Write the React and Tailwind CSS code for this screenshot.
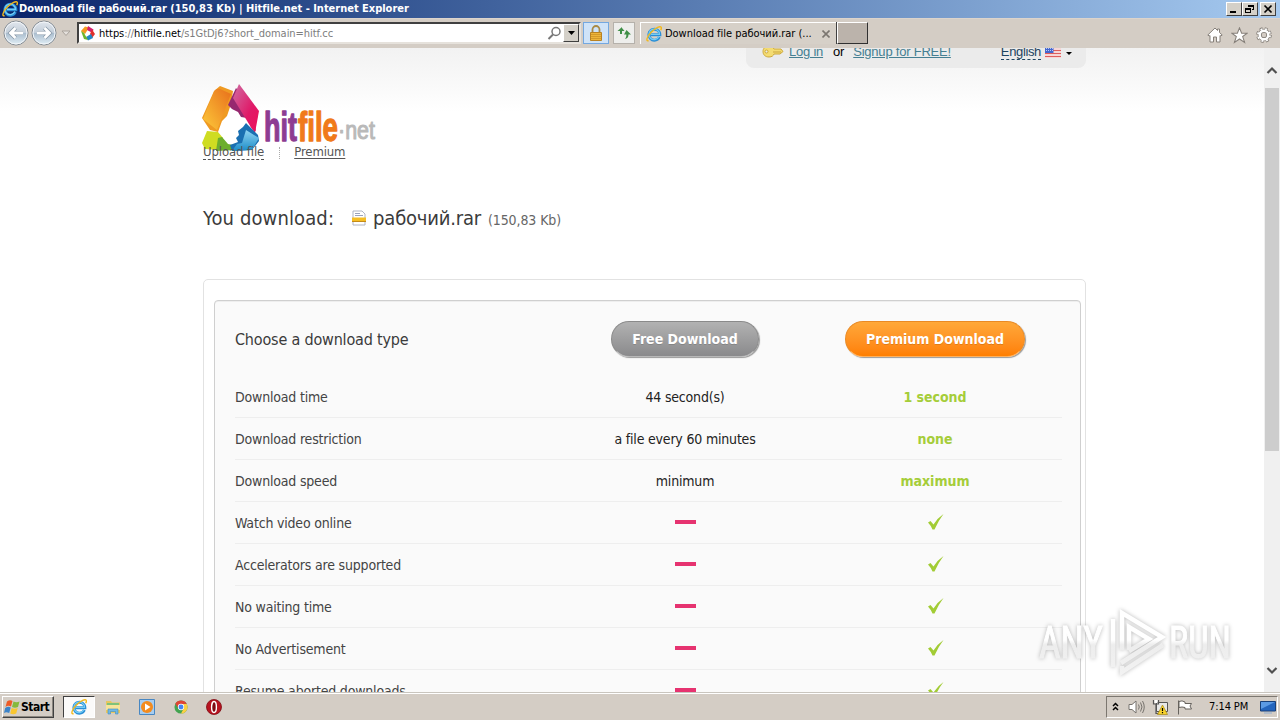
import { useId } from "react";

const rows = [
    { label: "Download time", free: "44 second(s)", premium: "1 second" },
    { label: "Download restriction", free: "a file every 60 minutes", premium: "none" },
    { label: "Download speed", free: "minimum", premium: "maximum" },
    { label: "Watch video online" },
    { label: "Accelerators are supported" },
    { label: "No waiting time" },
    { label: "No Advertisement" },
    { label: "Resume aborted downloads" },
];

function IeIcon({ className }) {
    return (
        <svg className={className} viewBox="0 0 16 16" fill="none">
            <path d="M13.4 11A5.500 5.500 0 1 1 13.900 8.700H4.600" stroke="#2a8ed6" strokeWidth="2.900" />
            <path d="M13 10.600A5.300 5.300 0 1 1 13.500 8.400H5" stroke="#74cdf5" strokeWidth="1.200" />
            <path
                d="M2.600 14.600C-.6 15.800 1 10.300 5.400 6 9.800 1.700 14.400-.4 15.200 1.300c.4.900 0 2-.5 3"
                stroke="#f3b91d"
                strokeWidth="1.400"
            />
        </svg>
    );
}

function HitfileMark({ className }) {
    return (
        <svg className={className} viewBox="0 0 16 16">
            <path d="M1 6 5 1.500l4 1L5 9z" fill="#f39a1f" />
            <path d="m8 1 5.500 3.500L12.500 8 7 5z" fill="#d5206c" />
            <path d="m12 4.500 3 4.500-3 4-2-4z" fill="#e0312d" />
            <path d="m11 9 2 4-5 2.500-2-3.500z" fill="#2187c5" />
            <path d="m1 6 3 2 4 7-4-1z" fill="#6db52d" />
        </svg>
    );
}

function RoundArrow({ flip }) {
    const id = useId();
    return (
        <svg className={flip ? "w-[26px] h-[26px] -scale-x-100" : "w-[26px] h-[26px]"} viewBox="0 0 26 26">
            <defs>
                <linearGradient id={id} x1="0" y1="0" x2="0" y2="1">
                    <stop offset="0" stopColor="#e2e7ee" />
                    <stop offset=".48" stopColor="#c3ced9" />
                    <stop offset=".5" stopColor="#a9bccd" />
                    <stop offset="1" stopColor="#e3f0f7" />
                </linearGradient>
            </defs>
            <circle cx="13" cy="13" r="12" fill={`url(#${id})`} stroke="#838b93" />
            <circle cx="13" cy="13" r="11" fill="none" stroke="#f3f6f9" />
            <path d="M12.500 8 7.500 13l5 5M8 13h12" fill="none" stroke="#8495a5" strokeWidth="4.200" />
            <path d="M12.500 8 7.500 13l5 5M8 13h12" fill="none" stroke="#fff" strokeWidth="2.800" />
        </svg>
    );
}

function TitleBar() {
    return (
        <div className="flex h-[18px] shrink-0 items-center bg-linear-to-r from-[#0a246a] to-[#a6caf0] pl-[2px] pr-[4px]">
            <IeIcon className="h-4 w-4" />
            <span className="ml-px flex-1 whitespace-nowrap text-[11px] font-bold leading-4 tracking-[-0.015px] text-white">
                Download file рабочий.rar (150,83 Kb) | Hitfile.net - Internet Explorer
            </span>
            <div className="flex">
                {["min", "restore", "close"].map((kind) => (
                    <div
                        key={kind}
                        className={
                            "flex h-[14px] w-4 items-center justify-center border border-t-white border-l-white border-r-[#404040] border-b-[#404040] bg-[#d4d0c8]" +
                            (kind === "close" ? " ml-[2px]" : "")
                        }
                    >
                        <svg className="h-[10px] w-3" viewBox="0 0 12 10" fill="none" stroke="#000" shapeRendering="crispEdges">
                            {kind === "min" && <path d="M2 8h6" strokeWidth="2" />}
                            {kind === "restore" && (
                                <>
                                    <path d="M4.500 3V1.500h5v4H8M1.500 4.500h5v4h-5z" />
                                    <path d="M4 1.500h6M1 4.500h6" strokeWidth="2" />
                                </>
                            )}
                            {kind === "close" && (
                                <path d="m2.500 1.500 7 7m0-7-7 7" strokeWidth="1.700" shapeRendering="auto" />
                            )}
                        </svg>
                    </div>
                ))}
            </div>
        </div>
    );
}

function NavBar() {
    return (
        <div className="flex h-[30px] shrink-0 items-start bg-[#d4cdc5] border-t border-[#dcd4cc] text-[11px]">
            <div className="flex pl-[3px] pt-px">
                <RoundArrow />
                <div className="ml-[2px]">
                    <RoundArrow flip />
                </div>
            </div>
            <svg className="ml-1 mt-[11px] h-[7px] w-[10px]" viewBox="0 0 10 7">
                <path d="M1 1h8L5 5.500z" fill="#e4e0dc" stroke="#aaa39c" />
            </svg>
            <div className="ml-[6px] mt-[3px] flex h-[22px] w-[504px] items-center border-2 border-t-[#404040] border-l-[#404040] border-r-[#e6e2dc] border-b-[#e6e2dc] bg-white pl-px">
                <HitfileMark className="h-4 w-4" />
                <span className="ml-[3px] mt-[2px] flex-1 whitespace-nowrap tracking-[-0.05px] text-[#7d7d7d]">
                    <span className="text-black">https</span>://<span className="text-black">hitfile.net</span>
                    /s1GtDj6?short_domain=hitf.cc
                </span>
                <svg className="h-[15px] w-[15px]" viewBox="0 0 15 15" fill="none" stroke="#777">
                    <circle cx="9" cy="5.500" r="4" strokeWidth="1.500" />
                    <path d="m6 8.500-4.500 4.500" strokeWidth="2" />
                </svg>
                <div className="ml-px flex h-[18px] w-4 items-center justify-center border border-t-white border-l-white border-r-[#404040] border-b-[#404040] bg-[#d4d0c8]">
                    <svg className="h-1 w-[7px]" viewBox="0 0 7 4">
                        <path d="M0 0h7L3.500 4z" />
                    </svg>
                </div>
            </div>
            <div className="ml-[2px] mt-[3px] flex h-[22px] w-[26px] items-center justify-center border border-[#74a8e0] bg-[#cfe3f8]">
                <svg className="h-4 w-4" viewBox="0 0 16 16">
                    <path d="M4.500 8V4.500a3.500 3.500 0 0 1 7 0V8" fill="none" stroke="#a98a45" strokeWidth="1.800" />
                    <path d="M2.500 7.500h11v8h-11z" fill="#eeb53a" stroke="#b98222" />
                    <path d="M3 9.500h10M3 11.500h10M3 13.500h10" stroke="#d39a2a" />
                </svg>
            </div>
            <div className="ml-1 mt-[3px] flex h-[22px] w-[22px] items-center justify-center border border-[#b5b1ab] bg-[#eeeeec]">
                <svg className="h-[14px] w-[14px]" viewBox="0 0 14 14">
                    <path d="M5 1 .5 5H3v3h2V5h2.500L5 2zM9.500 4 14 8.500h-2.500c0 3-1.500 4-3.500 4.500 1-1.500 1.500-2.500 1.300-4.500H7z" fill="#3f8f47" />
                </svg>
            </div>
            <div className="ml-[5px] mt-[3px] flex h-[22px] w-[197px] items-center border-t border-l border-white bg-[#d6d0c8] pl-[5px]">
                <IeIcon className="h-4 w-4" />
                <span className="ml-[3px] mt-[2px] flex-1 whitespace-nowrap tracking-[-0.03px]">Download file рабочий.rar (...</span>
                <svg className="mr-[7px] h-2 w-2" viewBox="0 0 8 8">
                    <path d="m.5.5 7 7m0-7-7 7" stroke="#7b7670" strokeWidth="1.600" />
                </svg>
            </div>
            <div className="mt-[3px] h-[22px] w-[31px] border border-t-white border-l-white border-r-[#303030] border-b-[#303030] bg-[#bbb3ab] shadow-[-1px_0_#404040]" />
            <div className="ml-auto mr-[8px] mt-[8px] flex gap-[8px]">
                <svg className="h-4 w-4" viewBox="0 0 16 16">
                    <path d="M8 1 .8 8l1.400 1 .8-.5V15h3.500v-5h3v5H13V8.500l.8.500 1.400-1L12.500 5.500V2h-2v1.500z" fill="#fff" stroke="#86807a" />
                </svg>
                <svg className="h-[17px] w-[17px]" viewBox="0 0 16 16">
                    <path d="m8 .8 2 5h5.300L11 9l1.800 5.600L8 11.300l-4.800 3.300L5 9 .7 5.800H6z" fill="#fff" stroke="#86807a" />
                </svg>
                <svg className="h-4 w-4" viewBox="0 0 16 16" fill="none">
                    <circle cx="8" cy="8" r="6.300" stroke="#86807a" strokeWidth="3" strokeDasharray="2.800 2.150" />
                    <circle cx="8" cy="8" r="4.300" stroke="#86807a" strokeWidth="4" />
                    <circle cx="8" cy="8" r="6" stroke="#fff" strokeWidth="2" strokeDasharray="1.800 2.912" strokeDashoffset="-.5" />
                    <circle cx="8" cy="8" r="4.300" stroke="#fff" strokeWidth="2.400" />
                </svg>
            </div>
        </div>
    );
}

function Logo() {
    return (
        <svg className="block h-[70px] w-[176px]" viewBox="202 83 176 70">
            <defs>
                <linearGradient id="orange" x1="1" y1="0" x2="0" y2="1">
                    <stop offset="0" stopColor="#e86f1b" />
                    <stop offset="1" stopColor="#fdca3a" />
                </linearGradient>
                <linearGradient id="pink" x1="0" y1="0" x2="1" y2="1">
                    <stop offset="0" stopColor="#cf6da3" />
                    <stop offset=".6" stopColor="#e01a68" />
                    <stop offset="1" stopColor="#ee1058" />
                </linearGradient>
                <linearGradient id="blue" x1="0" y1="0" x2="0" y2="1">
                    <stop offset="0" stopColor="#8fd4f2" />
                    <stop offset="1" stopColor="#1c8cc8" />
                </linearGradient>
            </defs>
            <path d="m214 91 6-5 13 5-2 13-4 12-5 5-4 11-8-2-8-12z" fill="#ef9a22" />
            <path d="m203 119 11-27q2-4 6-3l11 5-14 36z" fill="url(#orange)" />
            <path d="m228 105 8-17 13 15 7 28-5-4-4-9-6-1-3-5-6-3z" fill="#96286f" />
            <path d="m239 84 20 27-4 22-3-4-19-31z" fill="url(#pink)" />
            <path d="m207 131 11 1 5 6-4 12-14-1-3-6z" fill="#cfdc22" />
            <path d="m218 138 4-1 6 7 5 1 3 5-20 1z" fill="#6dae2d" />
            <path d="m243 127 3-4 12 12 1 6-7 9-20 1-2-6 8-3-2-4 3-3-1-4z" fill="#1a6fb1" />
            <path d="m246 130 13 8-7 12-20 1 5-7 5-1z" fill="url(#blue)" />
            <g fontFamily="Liberation Sans, sans-serif" strokeLinejoin="round">
                <text x="264" y="140.500" fontSize="40" fontWeight="bold" fill="#8d3c92" stroke="#8d3c92" strokeWidth="1.300" textLength="33" lengthAdjust="spacingAndGlyphs">hit</text>
                <text x="298" y="140.500" fontSize="40" fontWeight="bold" fill="#f07a1b" stroke="#f07a1b" strokeWidth="1.300" textLength="40" lengthAdjust="spacingAndGlyphs">file</text>
                <text x="338" y="138.500" fontSize="26" fill="#b9b9b9" stroke="#b9b9b9" strokeWidth="1.100" textLength="37" lengthAdjust="spacingAndGlyphs">·net</text>
            </g>
        </svg>
    );
}

function AccountBar() {
    return (
        <div className="ml-auto flex h-5 w-[340px] items-start rounded-b-lg bg-[#ebebeb] pl-4 pr-[14px] font-['Liberation_Sans',sans-serif] text-[13px] leading-[15px] tracking-[-0.22px] text-black">
            <svg className="mt-[-3px] h-[13px] w-[22px]" viewBox="0 0 22 13">
                <path d="M7 1C3 1 1 3.500 1 6.500S3 12 7 12c3 0 4.500-1.500 5-3h6l3-2.500L19 4h-7C11 2 9.500 1 7 1z" fill="#f4dc72" stroke="#cda83a" />
                <circle cx="4.500" cy="6.500" r="1.500" fill="#ebebeb" stroke="#cda83a" />
                <path d="M11 7h8" stroke="#c9a53c" />
            </svg>
            <a className="ml-[5px] mt-[-4px] whitespace-nowrap text-[#457f92] underline">Log in</a>
            <span className="ml-[10px] mt-[-4px]">or</span>
            <a className="ml-[9px] mt-[-4px] whitespace-nowrap text-[#457f92] underline">Signup for FREE!</a>
            <a className="ml-auto mt-[-4px] border-b border-dashed border-[#1d4461] tracking-[-0.35px] text-[#1d4461]">English</a>
            <svg className="ml-1 mt-[-1px] h-[11px] w-4" viewBox="0 0 16 11">
                <path fill="#fff" d="M0 0h16v11H0z" />
                <path d="M0 .5h16M0 3.500h16M0 6.500h16M0 9.500h16" stroke="#df5d5d" strokeWidth="1.600" />
                <path fill="#4467cf" d="M0 0h8.500v6H0z" />
                <path d="M1 1.500h7M1 3.500h7" stroke="#b9c8f5" strokeDasharray="1 1" />
            </svg>
            <svg className="ml-[5px] mt-[4px] h-[3px] w-[6px]" viewBox="0 0 6 3">
                <path d="M0 0h6L3 3z" />
            </svg>
        </div>
    );
}

function DownloadTable() {
    return (
        <div className="mt-[48px] rounded-[5px] border border-[#e2e2e2] bg-white px-[10px] pt-5 pr-[4px]">
            <div className="rounded-[4px] border border-[#cfcfcf] bg-[#fafafa] px-5 pr-[18px] shadow-[inset_0_1px_#eee]">
                <div className="grid h-[75px] grid-cols-[325px_250px_250px] pt-5 text-[#3b3b3b]">
                    <span className="h-9 text-[16px] leading-[38px] tracking-[-0.18px]">Choose a download type</span>
                    <div className="flex justify-center">
                        <button className="h-9 w-[148px] rounded-full border border-[#8a8a8a] border-b-[#b8b8b8] bg-linear-to-b from-[#b2b2b2] to-[#8a8a8c] text-sm font-bold leading-[34px] text-white shadow-[1px_1px_1px_#999] text-shadow-2xs">
                            Free Download
                        </button>
                    </div>
                    <div className="flex justify-center">
                        <button className="h-9 w-[180px] rounded-full border border-[#e98a24] border-b-[#ffb05c] bg-linear-to-b from-[#ffa838] to-[#ff7f00] text-sm font-bold leading-[34px] text-white shadow-[1px_1px_1px_#999] text-shadow-2xs">
                            Premium Download
                        </button>
                    </div>
                </div>
                {rows.map((row) => (
                    <div
                        key={row.label}
                        className="grid h-[42px] grid-cols-[325px_250px_250px] items-center border-b border-[#eeeeee] text-sm tracking-[-0.19px] text-[#444]"
                    >
                        <span>{row.label}</span>
                        <div className="flex justify-center text-[#222]">
                            {row.free || <div className="mb-[1px] h-1 w-[21px] bg-[#e63370]" />}
                        </div>
                        <div className="flex justify-center font-bold tracking-[-0.05px] text-[#a5cd39]">
                            {row.premium || (
                                <svg className="mb-[2px] ml-px h-4 w-4" viewBox="0 0 16 16">
                                    <path d="M0 8.500 2.500 7l3 3.500Q9.500 4 15.500 0 10.500 6.500 6.500 15.500h-2Q2.500 11 0 8.500z" fill="#a2cc35" />
                                </svg>
                            )}
                        </div>
                    </div>
                ))}
            </div>
        </div>
    );
}

function Watermark() {
    return (
        <svg className="absolute left-[1030px] top-[600px] h-[80px] w-[210px] drop-shadow-[0_0_2px_rgba(0,0,0,0.28)]" viewBox="0 0 210 80">
            <defs>
                <linearGradient id="fade" gradientUnits="userSpaceOnUse" x1="0" y1="0" x2="0" y2="80">
                    <stop offset=".5" stopColor="#fff" />
                    <stop offset=".56" stopColor="#ededed" />
                    <stop offset="1" stopColor="#f3f3f3" />
                </linearGradient>
            </defs>
            <g fill="url(#fade)" stroke="url(#fade)" strokeWidth="1" fontFamily="Roboto, sans-serif" fontSize="45">
                <text x="9" y="58" textLength="64" lengthAdjust="spacingAndGlyphs">ANY</text>
                <text x="139" y="58" textLength="62" lengthAdjust="spacingAndGlyphs">RUN</text>
            </g>
            <g fill="none" stroke="url(#fade)" strokeWidth="4.500">
                <path d="M92 50V13l40 24-41 26" />
                <path d="M99 50V27l20 12-20 12" />
                <path d="M83 19v48M92 66v6l41-27" />
            </g>
        </svg>
    );
}

function ScrollBar() {
    return (
        <div className="flex w-4 flex-col items-center bg-[#f0f0f0]">
            <svg className="mt-[18px] h-[9px] w-3" viewBox="0 0 12 9">
                <path d="m1.500 7 4.500-4.500L10.500 7" fill="none" stroke="#505050" strokeWidth="2.200" />
            </svg>
            <div className="mt-[13px] h-[363px] w-[14px] bg-[#cdcdcd]" />
            <svg className="mb-[17px] mt-auto h-[9px] w-3" viewBox="0 0 12 9">
                <path d="M1.500 2 6 6.500 10.500 2" fill="none" stroke="#505050" strokeWidth="2.200" />
            </svg>
        </div>
    );
}

function TaskBar() {
    return (
        <div className="flex h-7 shrink-0 items-center border-t border-[#c9c5be] bg-[#d4cdc5] pl-[2px] pr-[2px] text-[11px] shadow-[inset_0_1px_#fff]">
            <div className="mt-px flex h-[22px] w-[52px] items-center border border-t-white border-l-white border-r-[#404040] border-b-[#404040] pl-px shadow-[inset_-1px_-1px_#8c8780]">
                <svg className="h-4 w-4" viewBox="0 0 16 16">
                    <path d="M3 2.500q3-2 5.500-.5L7 7.500q-3-1.500-5.500.5z" fill="#ed5b27" />
                    <path d="M9.500 2.500q3 1.500 6 0L14 8q-3 1.500-6 0z" fill="#85b93c" />
                    <path d="M1.200 9q3-2 5.500-.5L5.200 14q-3-1.500-5.200 0z" fill="#3b83c9" />
                    <path d="M7.700 9q3 1.500 6 0l-1.500 5.500q-3 1.500-6 0z" fill="#f9c62f" />
                </svg>
                <span className="ml-px text-xs font-bold tracking-[-0.5px]">Start</span>
            </div>
            <div className="ml-[9px] flex h-[22px] w-8 items-center justify-center border border-t-[#404040] border-l-[#404040] border-r-white border-b-white bg-[#fbfaf9]">
                <IeIcon className="h-4 w-4" />
            </div>
            <svg className="ml-[10px] h-4 w-4" viewBox="0 0 16 16">
                <path d="M1 2h5l1 1.500h8V14H1z" fill="#e7c75e" />
                <path d="M2 4h12v3H2z" fill="#7fc27a" />
                <path d="M1 6h14v5H1z" fill="#f7e49a" />
                <path d="M3 15V10h10v5h-2.500v-2.500h-5V15z" fill="#6fb8e4" stroke="#3f8fc5" strokeWidth=".6" />
            </svg>
            <svg className="ml-[18px] h-4 w-4" viewBox="0 0 16 16">
                <path d="M.5.5h15v15H.5z" fill="#a7cdf0" stroke="#4887c2" />
                <circle cx="8" cy="8" r="6" fill="#f38b1e" />
                <path d="M6 4.500 11.500 8 6 11.500z" fill="#fff" />
            </svg>
            <svg className="ml-[19px] h-[14px] w-[14px]" viewBox="0 0 16 16">
                <circle cx="8" cy="8" r="7.500" fill="#42a350" />
                <path d="M1.500 4.300A7.500 7.500 0 0 1 14.500 4.300L8 5 5 9.500z" fill="#df4435" />
                <path d="M8 4.500h6.600A7.500 7.500 0 0 1 8 15.500l3.200-6z" fill="#fbd043" />
                <circle cx="8" cy="8" r="3.600" fill="#fff" />
                <circle cx="8" cy="8" r="2.800" fill="#4484f2" />
            </svg>
            <svg className="ml-[18px] h-4 w-4" viewBox="0 0 16 16">
                <circle cx="8" cy="8" r="7.500" fill="#b81320" stroke="#7e0a12" strokeWidth=".8" />
                <ellipse cx="8" cy="8" rx="2.400" ry="5.500" fill="#7e0a12" stroke="#fff" strokeWidth="1.400" />
            </svg>
            <div className="ml-auto mt-px flex h-[22px] w-[172px] items-center border border-t-[#7c7770] border-l-[#7c7770] border-r-white border-b-white">
                <svg className="mb-px ml-[5px] h-[9px] w-[7px]" viewBox="0 0 7 9" fill="none" stroke="#000" strokeWidth="1.500">
                    <path d="m1 4 2.500-2.500L6 4M1 8l2.500-2.500L6 8" />
                </svg>
                <svg className="ml-[9px] h-4 w-[17px]" viewBox="0 0 17 16" fill="none" stroke="#77736e">
                    <path d="M1 5.500h3L8 2v12l-4-3.500H1z" fill="#fff" />
                    <path d="M10.500 5.500q1.500 2.500 0 5M12.500 3.500q3 4.500 0 9M14.500 2q3.500 6 0 12" />
                </svg>
                <svg className="ml-[7px] h-4 w-4" viewBox="0 0 16 16">
                    <path d="M4.500 3.500h11v9h-11z" fill="#e8e8e8" stroke="#555" />
                    <path d="M1.500 1v4h5V1M4 5v9.500h4" fill="none" stroke="#555" strokeWidth="1.200" />
                    <path d="M2.500 1h3v3h-3z" fill="#fff" />
                    <path d="m10.500 6 5 9.500h-10z" fill="#f7d22d" stroke="#a38716" strokeWidth=".7" />
                    <path d="M10.500 9v3m0 1v1.300" stroke="#000" strokeWidth="1.200" />
                </svg>
                <svg className="ml-[9px] h-4 w-4" viewBox="0 0 16 16">
                    <path d="M1.500 1.500v14M2 2.500q3-1.500 6 .5v1.500h6.500L13 7l1.500 3H8V8.500q-3-1-6 0z" fill="#fff" stroke="#66625d" />
                </svg>
                <span className="ml-4 mt-px whitespace-nowrap tracking-[-0.1px]">7:14 PM</span>
                <svg className="ml-auto mr-px h-[14px] w-4" viewBox="0 0 16 14">
                    <path d="M.5 1.500h15v9.500H.5z" fill="#2465bd" stroke="#173f79" />
                    <path d="M1 2h14L1 9z" fill="#5b9ae4" />
                    <path d="M4 13h8" stroke="#8faccf" />
                </svg>
            </div>
        </div>
    );
}

export default function App() {
    return (
        <div className="relative flex h-[720px] w-[1280px] flex-col overflow-hidden bg-white font-['DejaVu_Sans_Condensed','DejaVu_Sans','Noto_Sans',sans-serif] font-stretch-condensed">
            <TitleBar />
            <NavBar />
            <div className="flex min-h-0 flex-1">
                <div className="flex-1 overflow-hidden bg-linear-to-b from-[#f2f2f2] to-white to-[64px] pl-[203px]">
                    <div className="w-[883px]">
                        <AccountBar />
                        <div className="-ml-px mt-[15px] h-[60px]">
                            <Logo />
                        </div>
                        <div className="relative flex h-[18px] items-start text-[13px] leading-[17px] tracking-[-0.12px] text-[#555]">
                            <a className="h-[17px] border-b border-dashed border-[#555]">Upload file</a>
                            <span className="ml-[15px] mt-1 h-3 border-l border-dotted border-[#aaa]" />
                            <a className="ml-[14px] underline underline-offset-2">Premium</a>
                        </div>
                        <div className="mt-[44px] flex h-[26px] items-center whitespace-nowrap text-[#3b3b3b]">
                            <span className="text-[20px] tracking-[0.12px]">You download:</span>
                            <svg className="ml-[18px] h-4 w-[14px]" viewBox="0 0 14 16">
                                <path d="M1 1h9l3 3v11H1z" fill="#fff" stroke="#aeb4c4" />
                                <path d="M3 3.500h5M3 5.500h8" stroke="#9aa3bb" />
                                <path d="M0 7.500h14v4H0z" fill="#f6be24" />
                                <path d="M0 11.500h14" stroke="#c48b18" />
                            </svg>
                            <span className="ml-[7px] text-[20px] tracking-[-0.2px]">рабочий.rar</span>
                            <span className="ml-[7px] mt-1 text-sm tracking-[-0.1px] text-[#666]">(150,83 Kb)</span>
                        </div>
                        <DownloadTable />
                    </div>
                </div>
                <ScrollBar />
            </div>
            <TaskBar />
            <Watermark />
        </div>
    );
}
